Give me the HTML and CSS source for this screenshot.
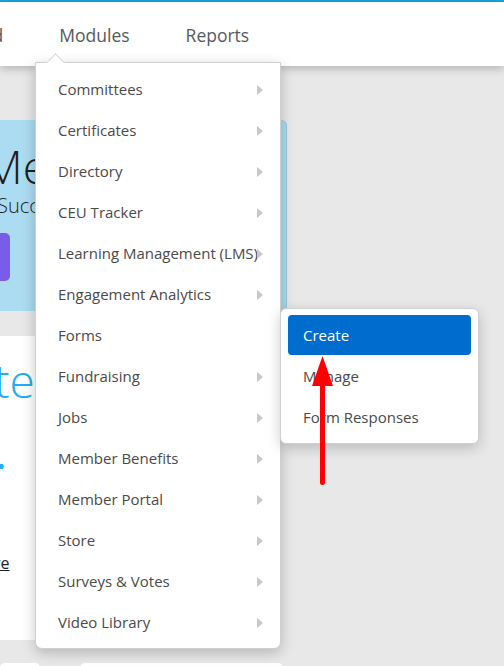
FILE: index.html
```html
<!DOCTYPE html>
<html>
<head>
<meta charset="utf-8">
<link rel="stylesheet" href="styles.css">
</head>
<body>
<div class="topbar"></div>
<header class="header">
  <nav class="nav">
    <span class="nav-item first">Dashboard</span>
    <span class="nav-item">Modules</span>
    <span class="nav-item">Reports</span>
  </nav>
</header>

<main class="main">
  <section class="banner">
    <h1 class="banner-title">Members</h1>
    <p class="banner-sub">Success starts here</p>
    <div class="banner-btn"></div>
  </section>
  <section class="card">
    <h2 class="card-title">Update</h2>
    <div class="card-dot">.</div>
    <a class="card-link">More</a>
  </section>
  <div class="bottom-row">
    <div class="bcard small"></div>
    <div class="bcard wide"></div>
  </div>
</main>

<div class="dropdown">
  <ul class="menu">
    <li class="item has-sub">Committees</li>
    <li class="item has-sub">Certificates</li>
    <li class="item has-sub">Directory</li>
    <li class="item has-sub">CEU Tracker</li>
    <li class="item has-sub">Learning Management (LMS)</li>
    <li class="item has-sub">Engagement Analytics</li>
    <li class="item">Forms</li>
    <li class="item has-sub">Fundraising</li>
    <li class="item has-sub">Jobs</li>
    <li class="item has-sub">Member Benefits</li>
    <li class="item has-sub">Member Portal</li>
    <li class="item has-sub">Store</li>
    <li class="item has-sub">Surveys &amp; Votes</li>
    <li class="item has-sub">Video Library</li>
  </ul>
</div>

<div class="submenu">
  <ul class="menu">
    <li class="sub-item active">Create</li>
    <li class="sub-item">Manage</li>
    <li class="sub-item">Form Responses</li>
  </ul>
</div>

<svg class="red-arrow" width="26" height="134" viewBox="0 0 26 134">
  <polygon points="12.5,2 2,32 23,32" fill="#ff0000"/>
  <rect x="10" y="28" width="5" height="103" rx="2.5" fill="#ff0000"/>
</svg>
</body>
</html>
```

FILE: styles.css
```css
* { box-sizing: border-box; }
html, body { margin: 0; padding: 0; }
body {
  width: 504px;
  height: 666px;
  overflow: hidden;
  background: #e8e8e8;
  font-family: "Open Sans", "Noto Sans", sans-serif;
  position: relative;
}
.topbar { height: 2px; background: #14a4e6; }
.header {
  height: 64px;
  background: #fff;
  position: relative;
  z-index: 2;
  box-shadow: 0 3px 8px rgba(0,0,0,0.22);
}
.nav {
  display: flex;
  align-items: center;
  height: 64px;
  margin-left: -87px;
  gap: 56px;
}
.nav-item {
  font-size: 17.5px;
  color: #555a60;
  line-height: 24px;
  padding-top: 2px;
}

.main { position: relative; z-index: 1; }
.banner {
  margin-top: 54px;
  width: 287px;
  height: 191px;
  background: #acdcf1;
  border-radius: 0 6px 6px 0;
  box-shadow: inset -1px 0 0 #95c9e0;
  overflow: hidden;
  padding-top: 20px;
}
.banner-title {
  margin: 0 0 0 -17px;
  font-size: 46px;
  font-weight: 300;
  line-height: 52px;
  color: #1d1d1d;
  white-space: nowrap;
}
.banner-sub {
  margin: 0 0 0 -3px;
  font-size: 20px;
  line-height: 27px;
  color: #222;
  white-space: nowrap;
  font-weight: 300;
}
.banner-btn {
  margin-top: 14px;
  margin-left: -100px;
  width: 110px;
  height: 48px;
  border-radius: 5px;
  background: #7a5cea;
}
.card {
  margin-top: 25px;
  width: 270px;
  height: 304px;
  background: #fff;
  padding-top: 16px;
  overflow: hidden;
}
.card-title {
  margin: 0 0 0 -118px;
  font-size: 46px;
  font-weight: 300;
  line-height: 56px;
  color: #22aef0;
  white-space: nowrap;
}
.card-dot {
  margin: 26px 0 0 -4px;
  font-size: 40px;
  line-height: 40px;
  color: #22aef0;
}
.card-link {
  display: block;
  margin: 78px 0 0 -30px;
  font-size: 16px;
  color: #222;
  text-decoration: underline;
}
.bottom-row {
  display: flex;
  gap: 40px;
  margin-top: 23px;
}
.bcard {
  height: 20px;
  background: #fff;
  border-radius: 5px 5px 0 0;
}
.bcard.small { width: 40px; }
.bcard.wide { width: 203px; }

.menu { list-style: none; margin: 0; padding: 0; }

.dropdown {
  position: absolute;
  left: 35px;
  top: 62px;
  width: 246px;
  height: 587px;
  background: #fff;
  border: 1px solid #cfcfcf;
  border-radius: 0 0 7px 7px;
  box-shadow: 0 4px 14px rgba(0,0,0,0.22);
  padding-top: 6px;
  z-index: 5;
}
.dropdown::before {
  content: "";
  position: absolute;
  left: 13px;
  top: -7px;
  width: 12px;
  height: 12px;
  background: #fff;
  border-left: 1px solid #d8d8d8;
  border-top: 1px solid #d8d8d8;
  transform: rotate(45deg);
}
.item {
  position: relative;
  height: 41px;
  line-height: 41px;
  padding-left: 22px;
  font-size: 15px;
  color: #4a4a4a;
  white-space: nowrap;
}
.item.has-sub::after {
  content: "";
  position: absolute;
  right: 17px;
  top: 16px;
  border-left: 6px solid #c8c8c8;
  border-top: 5px solid transparent;
  border-bottom: 5px solid transparent;
}

.submenu {
  position: absolute;
  left: 280px;
  top: 308px;
  width: 199px;
  height: 136px;
  background: #fff;
  border: 1px solid #cfcfcf;
  border-radius: 6px;
  box-shadow: 0 4px 14px rgba(0,0,0,0.2);
  padding: 6px 7px;
  z-index: 6;
}
.sub-item {
  height: 41px;
  line-height: 42px;
  padding-left: 15px;
  font-size: 15px;
  color: #4a4a4a;
  border-radius: 4px;
}
.sub-item.active {
  background: #006ccd;
  color: #fff;
  height: 40px;
  line-height: 40px;
}

.red-arrow {
  position: absolute;
  left: 310px;
  top: 354px;
  z-index: 7;
}
```
